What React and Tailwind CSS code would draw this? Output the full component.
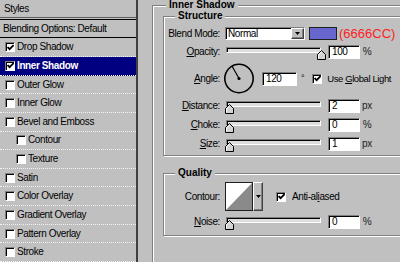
import React from "react";

const sunken =
  "border-t border-l border-t-[#808080] border-l-[#808080] border-b border-r border-b-white border-r-white shadow-[inset_1px_1px_0_#000]";
const raised =
  "border-t border-l border-t-white border-l-white border-b border-r border-b-[#404040] border-r-[#404040] shadow-[inset_-1px_-1px_0_#808080]";
const etched =
  "border border-[#808080] shadow-[inset_1px_1px_0_#fff,1px_1px_0_#fff]";

function Box({ checked }) {
  return (
    <span
      className={`flex h-[10px] w-[10px] shrink-0 items-center justify-center bg-white ${sunken}`}
    >
      {checked && (
        <svg width="7" height="7" viewBox="0 0 7 7">
          <path d="M0.6 3 L2.6 5.2 L6.6 1" fill="none" stroke="#000" strokeWidth="1.8" />
        </svg>
      )}
    </span>
  );
}

function Slider({ thumbClass }) {
  return (
    <div className="relative h-[14px] w-[98px] shrink-0">
      <div className={`ml-[1px] mt-[3px] h-[6px] w-[95px] bg-[#dedede] ${sunken}`} />
      <svg
        className={`absolute top-[3px] ${thumbClass}`}
        width="9"
        height="10"
        viewBox="0 0 9 10"
      >
        <path d="M0.5 9.5 V4.5 L4.5 0.5 L8.5 4.5 V9.5 Z" fill="#d4d4d4" stroke="#000" />
        <path d="M1.5 8.5 V4.9 L4.5 1.9" fill="none" stroke="#fff" />
      </svg>
    </div>
  );
}

function Field({ value, w = "w-[32px]" }) {
  return (
    <div className={`flex h-[14px] ${w} shrink-0 items-center bg-white pl-[3px] ${sunken}`}>
      <span className="leading-none">{value}</span>
    </div>
  );
}

function Label({ children }) {
  return <span className="w-[56px] shrink-0 text-right">{children}</span>;
}

function Legend({ children, pos }) {
  return (
    <span
      className={`absolute top-[-7px] ${pos} bg-[#c0c0c0] px-[3px] text-[10px] font-bold leading-[12px] tracking-[0px]`}
    >
      {children}
    </span>
  );
}

function SliderRow({ label, value, unit, thumbClass = "left-0", top = "mt-[5px]" }) {
  return (
    <div className={`${top} flex h-[14px] items-center`}>
      <Label>{label}</Label>
      <div className="ml-[5px]">
        <Slider thumbClass={thumbClass} />
      </div>
      <div className="ml-[5px]">
        <Field value={value} />
      </div>
      <span className="ml-[2px] w-[10px] text-center text-[#202020]">{unit}</span>
    </div>
  );
}

const items = [
  { label: "Drop Shadow", checked: true },
  { label: "Inner Shadow", checked: true, selected: true },
  { label: "Outer Glow" },
  { label: "Inner Glow" },
  { label: "Bevel and Emboss" },
  { label: "Contour", indent: true },
  { label: "Texture", indent: true },
  { label: "Satin" },
  { label: "Color Overlay" },
  { label: "Gradient Overlay" },
  { label: "Pattern Overlay" },
  { label: "Stroke" },
];

export default function App() {
  return (
    <div className="flex h-[262px] w-[400px] overflow-hidden bg-[#c0c0c0] font-['Liberation_Sans',Arial,sans-serif] text-[10px] leading-[12px] tracking-[-0.4px] text-black">
      {/* Left styles list */}
      <div className="flex w-[138px] shrink-0 flex-col border-r-2 border-r-[#404040]">
        <div className="flex h-[18px] items-center pl-[4px]">Styles</div>
        <div className="h-[3px] border-y border-t-[#606060] border-b-black" />
        <div className="flex h-[19px] items-center border-b border-b-black pl-[3px]">
          Blending Options: Default
        </div>
        {items.map((it) => (
          <div
            key={it.label}
            className={`flex h-[18.64px] shrink-0 items-center gap-[2px] border-b border-dotted border-b-[#f2f2f2] ${
              it.indent ? "pl-[16px]" : "pl-[5px]"
            } ${it.selected ? "bg-[#000080] font-bold text-white" : ""}`}
          >
            <Box checked={it.checked} />
            <span>{it.label}</span>
          </div>
        ))}
      </div>

      {/* Right panel */}
      <div className="min-w-0 flex-1 pl-[14px] pt-[5px]">
        <div className={`relative h-[300px] w-[270px] pl-[10px] pt-[10px] ${etched}`}>
          <Legend pos="left-[13px]">Inner Shadow</Legend>

          {/* Structure */}
          <div className={`relative w-[250px] pb-[4px] pt-[10px] ${etched}`}>
            <Legend pos="left-[11px]">Structure</Legend>

            <div className="flex h-[13px] items-center">
              <Label>Blend Mode:</Label>
              <div className={`ml-[5px] flex h-[13px] w-[80px] items-center justify-between bg-white pl-[2px] ${sunken}`}>
                <span>Normal</span>
                <div className={`flex h-[11px] w-[13px] items-center justify-center bg-[#c0c0c0] ${raised}`}>
                  <svg width="5" height="4" viewBox="0 0 5 4">
                    <path d="M0 0 H5 L2.5 3 Z" fill="#000" />
                  </svg>
                </div>
              </div>
              <div className="ml-[4px] h-[13px] w-[28px] border border-[#202020] bg-[#6666cc] bg-[radial-gradient(#8a8ae6_0.6px,transparent_0.7px)] bg-[length:2px_2px]" />
              <span className="ml-[2px] text-[13px] tracking-[0px] text-[#ff2020]">(6666CC)</span>
            </div>

            <SliderRow
              label={<><u>O</u>pacity:</>}
              value="100"
              unit="%"
              thumbClass="left-[92px]"
            />

            <div className="mt-[4px] flex h-[31px] items-center">
              <Label><u>A</u>ngle:</Label>
              <svg className="ml-[3px] shrink-0" width="32" height="31" viewBox="0 0 32 31">
                <circle cx="16" cy="15.5" r="14.2" fill="none" stroke="#000" strokeWidth="1.6" />
                <line x1="16" y1="15.5" x2="9" y2="3" stroke="#000" strokeWidth="1.2" />
                <circle cx="16" cy="15.5" r="1.6" fill="#000" />
              </svg>
              <div className="ml-[7px]">
                <Field value="120" w="w-[35px]" />
              </div>
              <span className="ml-[4px] mt-[9px] self-start text-[9px]">°</span>
              <div className="ml-[8px]">
                <Box checked />
              </div>
              <span className="ml-[5px] whitespace-nowrap text-[9.5px]">
                Use <u>G</u>lobal Light
              </span>
            </div>

            <SliderRow label={<><u>D</u>istance:</>} value="2" unit="px" />
            <SliderRow label={<><u>C</u>hoke:</>} value="0" unit="%" />
            <SliderRow label={<><u>S</u>ize:</>} value="1" unit="px" />
          </div>

          {/* Quality */}
          <div className={`relative mt-[17px] w-[250px] pb-[6px] pt-[8px] ${etched}`}>
            <Legend pos="left-[11px]">Quality</Legend>
            <div className="flex h-[29px] items-center">
              <Label>Contour:</Label>
              <div className="ml-[5px] flex h-[29px] shrink-0">
                <div className="h-[29px] w-[28px] border border-[#202020] bg-white">
                  <svg width="26" height="27" viewBox="0 0 26 27" className="block">
                    <path d="M0 27 L26 0 V27 Z" fill="#8a8a8a" />
                  </svg>
                </div>
                <div className={`flex h-[29px] w-[10px] items-center justify-center bg-[#c0c0c0] ${raised}`}>
                  <svg width="5" height="4" viewBox="0 0 5 4">
                    <path d="M0 0 H5 L2.5 3 Z" fill="#000" />
                  </svg>
                </div>
              </div>
              <div className="ml-[13px]">
                <Box checked />
              </div>
              <span className="ml-[6px] whitespace-nowrap">
                Anti-al<u>i</u>ased
              </span>
            </div>
            <SliderRow label={<><u>N</u>oise:</>} value="0" unit="%" top="mt-[4px]" />
          </div>
        </div>
      </div>
    </div>
  );
}
